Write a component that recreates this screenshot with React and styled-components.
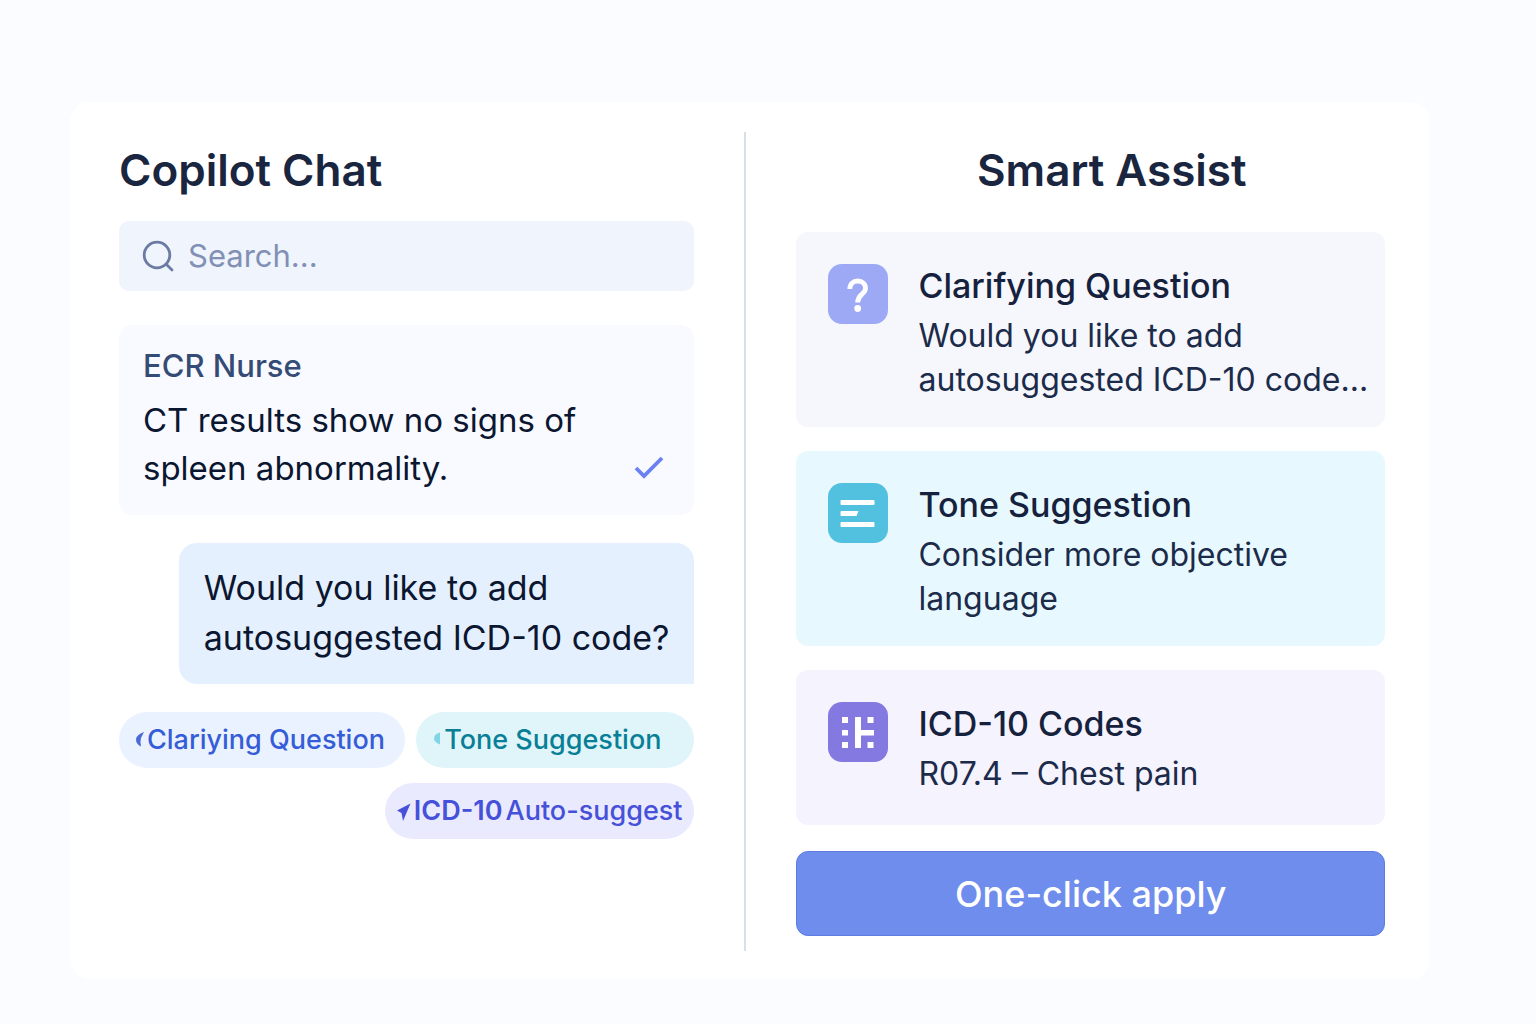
import React from "react";
import styled, { createGlobalStyle } from "styled-components";

const GlobalStyle = createGlobalStyle`
  *, *::before, *::after { box-sizing: border-box; }
  body {
    margin: 0;
    background: #fafcff;
    color: #0b1630;
    font-family: Inter, "Liberation Sans", sans-serif;
  }
  h1, h2, h3, p { margin: 0; }
  button, input { font-family: inherit; }
`;

const Page = styled.div`
  min-height: 100vh;
  padding: 102px 106px 46px 70px;
`;

const Panel = styled.main`
  display: grid;
  grid-template-columns: minmax(0, 575fr) 2px minmax(0, 588fr);
  column-gap: 50px;
  padding: 30px 45px 28px 49px;
  border-radius: 20px;
  background: #ffffff;
`;

const Divider = styled.div`
  background: #d9dfe6;
`;

const Column = styled.section`
  display: flex;
  flex-direction: column;
  padding: 14px 0 15px;
`;

const Heading = styled.h1`
  color: #1a2640;
  font-size: 44px;
  font-weight: 600;
  line-height: 48px;
  text-align: ${(p) => p.$align || "left"};
  padding-left: ${(p) => (p.$align === "center" ? "42px" : "0")};
`;

const SearchBox = styled.label`
  display: flex;
  align-items: center;
  gap: 12px;
  height: 70px;
  margin-top: 27px;
  padding: 0 22px;
  border-radius: 10px;
  background: #eff4fd;
`;

const SearchInput = styled.input`
  flex: 1;
  min-width: 0;
  padding: 0;
  border: 0;
  outline: 0;
  background: transparent;
  color: #1a2640;
  font-size: 31px;
  line-height: 40px;
  &::placeholder { color: #8190b4; opacity: 1; }
`;

const Message = styled.article`
  margin-top: 34px;
  padding: 19px 24px 23px;
  border-radius: 14px;
  background: #f8faff;
`;

const Sender = styled.h2`
  color: #344b75;
  font-size: 31px;
  font-weight: 500;
  line-height: 44px;
`;

const MessageBody = styled.div`
  display: flex;
  align-items: flex-end;
  justify-content: space-between;
  margin-top: 8px;
  padding-right: 6px;
`;

const MessageText = styled.p`
  color: #0b1630;
  font-size: 33px;
  line-height: 48px;
`;

const CheckIcon = styled.svg`
  flex: none;
  width: 30px;
  height: 24px;
  margin-bottom: 12px;
`;

const Bubble = styled.p`
  align-self: flex-end;
  margin-top: 28px;
  padding: 20px 25px 21px;
  border-radius: 18px 18px 0 18px;
  background: #e5f0ff;
  color: #0b1630;
  font-size: 34px;
  line-height: 50px;
  white-space: nowrap;
`;

const ChipGrid = styled.div`
  display: grid;
  grid-template-columns: 286fr 278fr;
  gap: 15px 11px;
  margin-top: 28px;
`;

const chipTones = {
  blue: { bg: "#ebf2ff", fg: "#355dd8" },
  teal: { bg: "#dff5fa", fg: "#087f97" },
  indigo: { bg: "#e9eafe", fg: "#4650d8" },
};

const Chip = styled.button`
  display: flex;
  align-items: center;
  gap: 3px;
  height: 56px;
  padding: 0 ${(p) => (p.$wide ? "12px" : "16px")};
  border: 0;
  border-radius: 28px;
  background: ${(p) => chipTones[p.$tone].bg};
  color: ${(p) => chipTones[p.$tone].fg};
  font-size: 27px;
  line-height: 36px;
  white-space: nowrap;
  cursor: pointer;
  ${(p) => p.$wide && "grid-column: 1 / -1; justify-self: end;"}
`;

const ChipLabel = styled.span`
  font-weight: ${(p) => (p.$strong ? 600 : 500)};
`;

const Glyph = styled.svg`
  flex: none;
  width: ${(p) => p.$w}px;
  height: 20px;
`;

const cardTones = {
  slate: { bg: "#f5f7fd", icon: "#9ea9f6" },
  cyan: { bg: "#e7f9fe", icon: "#51c1df" },
  violet: { bg: "#f5f3fe", icon: "#8479e0" },
};

const Cards = styled.div`
  display: flex;
  flex-direction: column;
  gap: 24px;
  margin-top: 38px;
`;

const Card = styled.article`
  display: grid;
  grid-template-columns: 60px minmax(0, 1fr);
  column-gap: 30px;
  min-height: 155px;
  padding: 32px 0 25px 32px;
  border-radius: 12px;
  background: ${(p) => cardTones[p.$tone].bg};
`;

const Tile = styled.div`
  width: 60px;
  height: 60px;
  border-radius: 14px;
  background: ${(p) => cardTones[p.$tone].icon};
  svg { display: block; width: 60px; height: 60px; }
`;

const CardTitle = styled.h3`
  color: #16223d;
  font-size: 34px;
  font-weight: 500;
  line-height: 44px;
`;

const CardText = styled.p`
  margin-top: 6px;
  color: #1c2b4a;
  font-size: 32px;
  line-height: 44px;
`;

const ApplyButton = styled.button`
  height: 85px;
  margin-top: 26px;
  border: 1px solid #5c7ce2;
  border-radius: 12px;
  background: #6f8dec;
  color: #ffffff;
  font-size: 36px;
  font-weight: 500;
  line-height: 48px;
  cursor: pointer;
`;

const QuestionArt = () => (
  <svg viewBox="0 0 60 60" fill="none" aria-hidden="true">
    <path d="M21.800 25C21.800 20 25 17 29.700 17C34.300 17 37.500 19.800 37.500 24.200C37.500 30.500 29.700 30 29.700 38.500" stroke="#fff" strokeWidth="4.8" />
    <circle cx="29.700" cy="44.500" r="3.400" fill="#fff" />
  </svg>
);

const LinesArt = () => (
  <svg viewBox="0 0 60 60" fill="#fff" aria-hidden="true">
    <rect x="12.500" y="17" width="34" height="5" rx="1" />
    <path d="M13.500 28H30.500L28.500 33H13.500Q12.500 33 12.500 32V29Q12.500 28 13.500 28Z" />
    <rect x="12.500" y="39" width="34" height="5" rx="1" />
  </svg>
);

const CodesArt = () => (
  <svg viewBox="0 0 60 60" fill="#fff" aria-hidden="true">
    <path d="M14 15h6v6h-6zM14 28h6v5.500h-6zM14 40h6v6h-6zM39.500 15h6v6h-6zM39.500 40h6v6h-6zM27 15h6v13h13v5.500H33v12.500h-6z" />
  </svg>
);

export default function App() {
  return (
    <>
      <GlobalStyle />
      <Page>
        <Panel>
          <Column>
            <Heading>Copilot Chat</Heading>
            <SearchBox>
              <svg width="35" height="35" viewBox="0 0 35 35" fill="none" stroke="#6c7ba3" strokeWidth="2.8" strokeLinecap="round" aria-hidden="true">
                <circle cx="16" cy="16" r="12.8" />
                <path d="M25.500 25.500L31 31" />
              </svg>
              <SearchInput type="text" placeholder="Search..." aria-label="Search" />
            </SearchBox>
            <Message>
              <Sender>ECR Nurse</Sender>
              <MessageBody>
                <MessageText>
                  CT results show no signs of<br />spleen abnormality.
                </MessageText>
                <CheckIcon viewBox="0 0 30 24" fill="none" stroke="#6b80f2" strokeWidth="3.8" aria-hidden="true">
                  <path d="M2 12L10 20L28 2" />
                </CheckIcon>
              </MessageBody>
            </Message>
            <Bubble>
              Would you like to add<br />autosuggested ICD-10 code?
            </Bubble>
            <ChipGrid>
              <Chip type="button" $tone="blue">
                <Glyph $w={9} viewBox="0 0 9 20" fill="#4a6ad8" aria-hidden="true">
                  <path d="M9 2L6 8Q5 11 6 16.500Q1 14 1 9.500Q1 5 9 2Z" />
                </Glyph>
                <ChipLabel>Clariying Question</ChipLabel>
              </Chip>
              <Chip type="button" $tone="teal">
                <Glyph $w={9} viewBox="0 0 9 20" fill="#7fd6e6" aria-hidden="true">
                  <path d="M8 2.500V14.500Q2 12 2 8.500Q2 4 8 2.500Z" />
                </Glyph>
                <ChipLabel>Tone Suggestion</ChipLabel>
              </Chip>
              <Chip type="button" $tone="indigo" $wide>
                <Glyph $w={14} viewBox="0 0 14 20" fill="#4650d8" aria-hidden="true">
                  <path d="M13.500 2.500L6 20L4.500 12L0 9.500Z" />
                </Glyph>
                <ChipLabel $strong>ICD-10</ChipLabel>
                <ChipLabel>Auto-suggest</ChipLabel>
              </Chip>
            </ChipGrid>
          </Column>
          <Divider />
          <Column>
            <Heading as="h2" $align="center">Smart Assist</Heading>
            <Cards>
              <Card $tone="slate">
                <Tile $tone="slate"><QuestionArt /></Tile>
                <div>
                  <CardTitle>Clarifying Question</CardTitle>
                  <CardText>Would you like to add<br />autosuggested ICD-10 code...</CardText>
                </div>
              </Card>
              <Card $tone="cyan">
                <Tile $tone="cyan"><LinesArt /></Tile>
                <div>
                  <CardTitle>Tone Suggestion</CardTitle>
                  <CardText>Consider more objective<br />language</CardText>
                </div>
              </Card>
              <Card $tone="violet">
                <Tile $tone="violet"><CodesArt /></Tile>
                <div>
                  <CardTitle>ICD-10 Codes</CardTitle>
                  <CardText>R07.4 – Chest pain</CardText>
                </div>
              </Card>
            </Cards>
            <ApplyButton type="button">One-click apply</ApplyButton>
          </Column>
        </Panel>
      </Page>
    </>
  );
}
